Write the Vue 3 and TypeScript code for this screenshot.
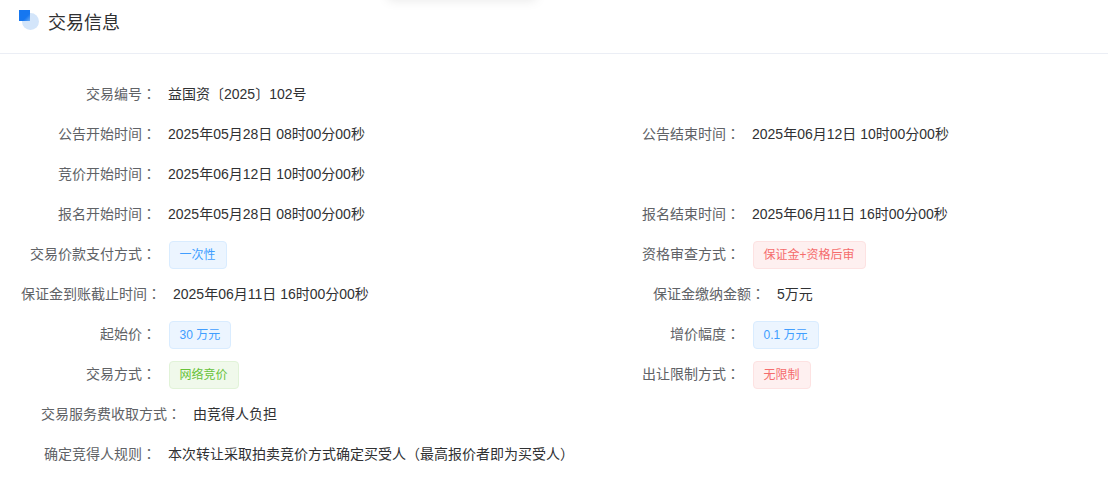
<script setup lang="ts">
type Tone = 'blue' | 'red' | 'green'

interface Field {
  label: string
  value: string
  tag?: Tone
  size?: 'mid' | 'wide'
}

const rows: Field[][] = [
  [{ label: '交易编号：', value: '益国资〔2025〕102号' }],
  [
    { label: '公告开始时间：', value: '2025年05月28日 08时00分00秒' },
    { label: '公告结束时间：', value: '2025年06月12日 10时00分00秒' },
  ],
  [{ label: '竞价开始时间：', value: '2025年06月12日 10时00分00秒' }],
  [
    { label: '报名开始时间：', value: '2025年05月28日 08时00分00秒' },
    { label: '报名结束时间：', value: '2025年06月11日 16时00分00秒' },
  ],
  [
    { label: '交易价款支付方式：', value: '一次性', tag: 'blue' },
    { label: '资格审查方式：', value: '保证金+资格后审', tag: 'red' },
  ],
  [
    { label: '保证金到账截止时间：', value: '2025年06月11日 16时00分00秒', size: 'mid' },
    { label: '保证金缴纳金额：', value: '5万元', size: 'wide' },
  ],
  [
    { label: '起始价：', value: '30 万元', tag: 'blue' },
    { label: '增价幅度：', value: '0.1 万元', tag: 'blue' },
  ],
  [
    { label: '交易方式：', value: '网络竞价', tag: 'green' },
    { label: '出让限制方式：', value: '无限制', tag: 'red' },
  ],
  [{ label: '交易服务费收取方式：', value: '由竞得人负担', size: 'wide' }],
  [{ label: '确定竞得人规则：', value: '本次转让采取拍卖竞价方式确定买受人（最高报价者即为买受人）' }],
]

// full-width punctuation sits centred in the reference, the TC font draws it that way
function pieces(text: string): string[] {
  return text.split(/([：（）〔〕])/).filter(Boolean)
}

function isPunct(piece: string): boolean {
  return /^[：（）〔〕]$/.test(piece)
}
</script>

<template>
  <div class="page">
    <div class="top-shadow"></div>
    <header class="head">
      <span class="mark"><i class="dot"></i><i class="square"></i></span>
      <h2 class="title">交易信息</h2>
    </header>
    <div class="list">
      <div v-for="(row, i) in rows" :key="i" class="row">
        <div v-for="field in row" :key="field.label" class="field">
          <span class="label" :class="field.size">
            <template v-for="(piece, k) in pieces(field.label)" :key="k">
              <span v-if="isPunct(piece)" class="punct">{{ piece }}</span>
              <template v-else>{{ piece }}</template>
            </template>
          </span>
          <span v-if="field.tag" class="tag" :class="field.tag">{{ field.value }}</span>
          <span v-else class="value">
            <template v-for="(piece, k) in pieces(field.value)" :key="k">
              <span v-if="isPunct(piece)" class="punct">{{ piece }}</span>
              <template v-else>{{ piece }}</template>
            </template>
          </span>
        </div>
      </div>
    </div>
  </div>
</template>

<style>
html,
body {
  margin: 0;
  background: #fff;
}
</style>

<style scoped>
.page {
  position: relative;
  width: 1108px;
  height: 489px;
  overflow: hidden;
  background: #fff;
  font-family: "Liberation Sans", "Noto Sans CJK SC", sans-serif;
  font-size: 14px;
}
.top-shadow {
  position: absolute;
  top: -14px;
  left: 388px;
  width: 148px;
  height: 12px;
  box-shadow: 0 2px 12px rgba(0, 0, 0, 0.1);
}
.head {
  display: flex;
  align-items: center;
  height: 53px;
  padding-left: 19px;
  border-bottom: 1px solid #ebeef5;
}
.mark {
  position: relative;
  flex: none;
  width: 20px;
  height: 21px;
  margin-right: 9px;
  margin-top: -12px;
}
.mark i {
  position: absolute;
  display: block;
}
.dot {
  left: 3px;
  top: 3px;
  width: 17px;
  height: 17px;
  border-radius: 50%;
  background: #d3e5fa;
}
.square {
  left: 0;
  top: 0;
  width: 11px;
  height: 11px;
  background: linear-gradient(135deg, #1677f0 65%, #6aa9f2);
}
.title {
  margin: -11px 0 0;
  font-size: 18px;
  font-weight: 400;
  color: #303133;
}
.list {
  padding-top: 20px;
}
.row {
  display: grid;
  grid-template-columns: 584px 1fr;
  height: 40px;
}
.field {
  display: flex;
  align-items: center;
  gap: 12px;
}
.label {
  flex: none;
  width: 156px;
  margin-bottom: 2px;
  text-align: right;
  color: #606266;
  white-space: nowrap;
}
.label.mid {
  width: 161px;
}
.label.wide {
  width: 181px;
}
.punct {
  font-family: "Noto Sans CJK TC", sans-serif;
}
.value {
  margin-bottom: 2px;
  color: #303133;
  white-space: nowrap;
}
.tag {
  box-sizing: border-box;
  height: 28px;
  margin-top: 2px;
  margin-left: 0.6px;
  padding: 0 10px;
  line-height: 26px;
  font-size: 12px;
  border: 1px solid;
  border-radius: 4px;
  white-space: nowrap;
}
.tag.blue {
  color: #409eff;
  background: #ecf5ff;
  border-color: #d9ecff;
}
.tag.red {
  color: #f56c6c;
  background: #fef0f0;
  border-color: #fde2e2;
}
.tag.green {
  color: #67c23a;
  background: #f0f9eb;
  border-color: #e1f3d8;
}
</style>
